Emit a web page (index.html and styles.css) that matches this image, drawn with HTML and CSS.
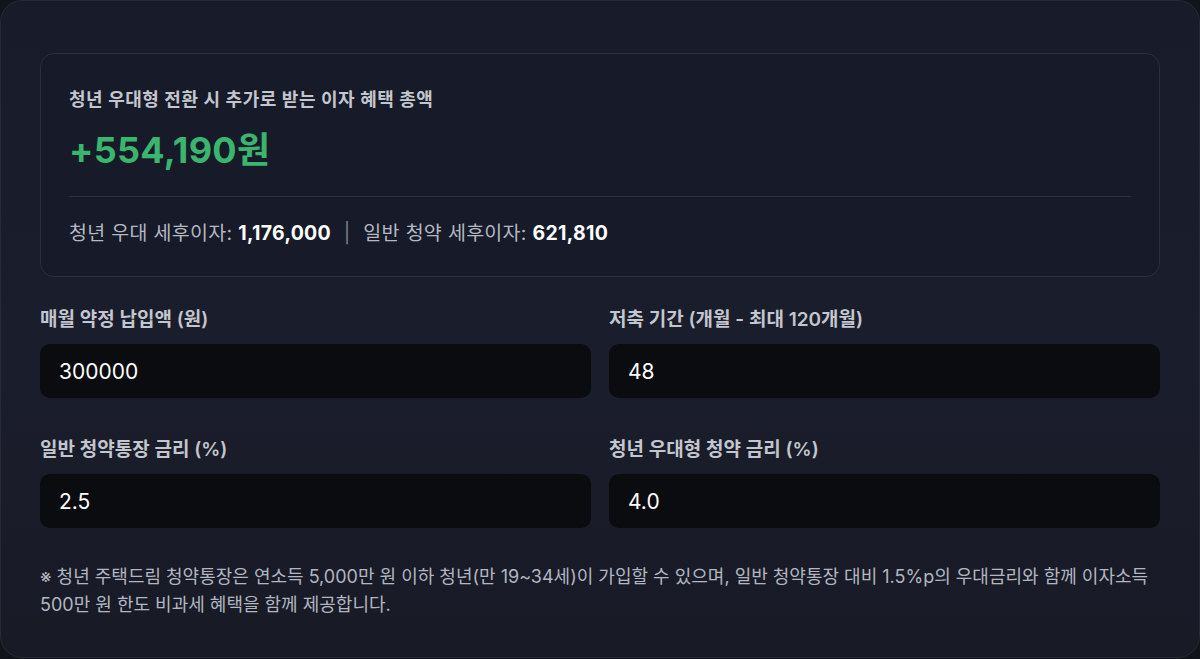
FILE: index.html
```html
<!DOCTYPE html>
<html lang="ko">
<head>
  <meta charset="UTF-8" />
  <title>청년 주택드림 청약 계산기</title>
  <link rel="stylesheet" href="styles.css">
</head>
<body>

  <div class="calc-card">

    <!-- Result summary -->
    <div class="result-box">
      <div class="result-title">청년 우대형 전환 시 추가로 받는 이자 혜택 총액</div>
      <div class="result-amount">+554,190원</div>
      <div class="result-detail">
        청년 우대 세후이자: <b>1,176,000</b>
        <span class="sep">|</span>
        일반 청약 세후이자: <b>621,810</b>
      </div>
    </div>

    <!-- Inputs -->
    <div class="input-grid">
      <div class="field">
        <label for="monthly">매월 약정 납입액 (원)</label>
        <input type="text" id="monthly" value="300000" />
      </div>
      <div class="field">
        <label for="months">저축 기간 (개월 - 최대 120개월)</label>
        <input type="text" id="months" value="48" />
      </div>
      <div class="field">
        <label for="normalRate">일반 청약통장 금리 (%)</label>
        <input type="text" id="normalRate" value="2.5" />
      </div>
      <div class="field">
        <label for="youthRate">청년 우대형 청약 금리 (%)</label>
        <input type="text" id="youthRate" value="4.0" />
      </div>
    </div>

    <p class="note">※ 청년 주택드림 청약통장은 연소득 5,000만 원 이하 청년(만 19~34세)이 가입할 수 있으며, 일반 청약통장 대비 1.5%p의 우대금리와 함께 이자소득 500만 원 한도 비과세 혜택을 함께 제공합니다.</p>

  </div>

</body>
</html>
```

FILE: styles.css
```css
* {
  box-sizing: border-box;
  margin: 0;
  padding: 0;
}

body {
  font-family: Inter, "Noto Sans CJK KR", sans-serif;
  background: #12141c;
  width: 1200px;
  height: 659px;
  overflow: hidden;
}

/* Outer card */
.calc-card {
  width: 1200px;
  height: 658px;
  background: linear-gradient(180deg, #181b29 0%, #1a1d2b 55%, #181a26 100%);
  border: 1px solid #262937;
  border-radius: 22px;
  padding: 52px 39px 0;
}

/* Result summary */
.result-box {
  background: #171a28;
  border: 1px solid #2a2e3e;
  border-radius: 14px;
  padding: 34px 28px 30px;
}

.result-title {
  font-size: 18px;
  line-height: 24px;
  font-weight: 600;
  color: #c3c6ce;
  letter-spacing: 0.5px;
}

.result-amount {
  margin-top: 18px;
  font-size: 36px;
  line-height: 40px;
  font-weight: 700;
  color: #3bb56d;
  letter-spacing: 0.3px;
}

.result-detail {
  margin-top: 26px;
  padding-top: 23px;
  border-top: 1px solid #2c3040;
  font-size: 19.5px;
  line-height: 26px;
  color: #b4b8c2;
  letter-spacing: 0.3px;
}

.result-detail b {
  color: #ffffff;
  font-weight: 700;
}

.result-detail .sep {
  color: #7d818c;
  margin: 0 7px;
}

/* Inputs */
.input-grid {
  display: grid;
  grid-template-columns: 1fr 1fr;
  column-gap: 18px;
  row-gap: 40px;
  margin-top: 31px;
}

.field label {
  display: block;
  font-size: 19px;
  line-height: 24px;
  font-weight: 600;
  color: #c3c6ce;
  margin-bottom: 12px;
}

.field input {
  width: 100%;
  height: 54px;
  padding: 0 19px;
  background: #0b0c10;
  border: none;
  border-radius: 10px;
  outline: none;
  font-family: Inter, "Noto Sans CJK KR", sans-serif;
  font-size: 21px;
  color: #ffffff;
}

.note {
  margin-top: 35px;
  font-size: 18px;
  line-height: 28px;
  color: #b2b6c0;
}
```
